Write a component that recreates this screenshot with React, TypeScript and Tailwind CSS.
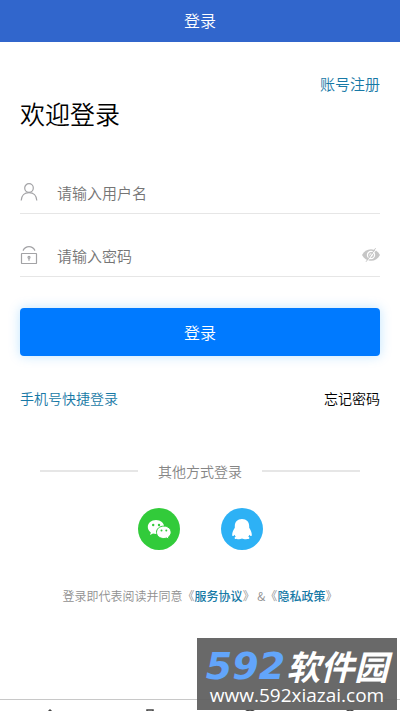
import React from "react";

function UserIcon() {
  return (
    <svg viewBox="0 0 18 18" className="h-[18px] w-[18px] shrink-0" fill="none" stroke="#a3a3a6" strokeWidth="1.2" aria-hidden="true">
      <circle cx="9" cy="5" r="4.3" />
      <path d="M1.2 17.6C1.4 12.6 4.6 9.6 9 9.6s7.6 3 7.8 8" />
    </svg>
  );
}

function LockIcon() {
  return (
    <svg viewBox="0 0 18 18" className="h-[18px] w-[18px] shrink-0" fill="none" stroke="#a3a3a6" strokeWidth="1.2" aria-hidden="true">
      <rect x="1.5" y="7.5" width="15" height="10" rx="0.4" />
      <path d="M3 4.6C4.4 2 6.4 0.7 9 0.7s4.6 1.3 6 3.9" />
      <circle cx="9" cy="11.3" r="1" />
      <path d="M9 12.2v2.6" />
    </svg>
  );
}

function EyeOffIcon() {
  return (
    <svg viewBox="0 0 18 16" className="h-4 w-[18px]" fill="none" aria-hidden="true">
      <path d="M0 8C2 4.3 5 2.2 9 2.2S16 4.3 18 8c-2 3.700-5 5.800-9 5.800S2 11.700 0 8Z" fill="#c6c6c6" />
      <circle cx="9" cy="8" r="4.200" fill="#fff" />
      <circle cx="9" cy="8" r="2.300" stroke="#c6c6c6" strokeWidth="1.300" />
      <path d="M14.500 2 5 15" stroke="#fff" strokeWidth="1" />
      <path d="M13.600 1.200 4 14.800" stroke="#c6c6c6" strokeWidth="1" />
    </svg>
  );
}

function WechatIcon() {
  return (
    <svg viewBox="0 0 42 42" className="size-[42px]" aria-hidden="true">
      <circle cx="21" cy="21" r="21" fill="#32cb3a" />
      <path d="M18 12c-4.700 0-8.200 3.100-8.200 7 0 2.200 1.100 4.100 3 5.400l-.8 2.600 3-1.500c1 .3 2 .5 3 .5 4.700 0 8.200-3.100 8.200-7s-3.500-7-8.200-7Z" fill="#fff" />
      <path d="M25.800 18.100c-4.200 0-7.300 2.700-7.300 6.200s3.100 6.200 7.300 6.200c1 0 2-.2 2.800-.5l2.500 1.300-.7-2.200c1.700-1.100 2.700-2.800 2.700-4.800 0-3.500-3.100-6.200-7.300-6.200Z" fill="#fff" stroke="#32cb3a" strokeWidth="1" />
      <g fill="#32cb3a">
        <circle cx="15.200" cy="17" r="1.200" />
        <circle cx="21" cy="17" r="1.200" />
        <circle cx="23.500" cy="22.400" r="1" />
        <circle cx="28.300" cy="22.400" r="1" />
      </g>
    </svg>
  );
}

function QQIcon() {
  return (
    <svg viewBox="0 0 42 42" className="size-[42px]" aria-hidden="true">
      <circle cx="21" cy="21" r="21" fill="#2db1f5" />
      <path d="M21 11c-4.500 0-7.200 3-7.200 7.200v1.500c-1.500 2.300-2.600 4.900-2.600 6.800 0 1 .2 1.600.6 1.600.6 0 1.300-.6 1.900-1.400.2.800.6 1.500 1.100 2.100-.8.400-1.300.8-1.300 1.300 0 .8 1.500 1.200 3.500 1.200 1.700 0 3.300-.3 4-.8.700.5 2.300.8 4 .8 2 0 3.500-.4 3.500-1.200 0-.5-.5-.9-1.300-1.300.5-.6.900-1.300 1.100-2.100.6.800 1.300 1.400 1.900 1.400.4 0 .6-.6.600-1.600 0-1.900-1.100-4.500-2.600-6.800v-1.500C28.200 14 25.500 11 21 11Z" fill="#fff" />
    </svg>
  );
}

const tabs = [
  { name: "home", shape: <path d="m2 10 8-8 8 8M5 8v9h10V8" /> },
  { name: "shop", shape: <path d="M7 6V2h6v4M2 5h16v12H2Z" /> },
  { name: "find", shape: <circle cx="10" cy="9" r="7" /> },
  { name: "mine", shape: <circle cx="10" cy="7" r="5" /> },
];

export default function App() {
  return (
    <div className="relative flex h-screen flex-col overflow-hidden bg-white font-['Noto_Sans_CJK_SC',sans-serif] font-[350] text-black">
      <header className="flex h-[42px] shrink-0 items-center justify-center bg-[#3166cc] pb-0.5 text-base text-white">
        登录
      </header>

      <main className="flex flex-1 flex-col px-5 pt-8">
        <a href="#register" className="self-end text-[15px] leading-5 text-[#1779a6]">账号注册</a>
        <h1 className="text-[25px] leading-[38px] font-[350]">欢迎登录</h1>

        <form className="mt-[38px]" onSubmit={(e) => e.preventDefault()}>
          <label className="flex h-11 items-center gap-[19px] border-b border-[#e6e6e6]">
            <UserIcon />
            <input
              type="text"
              aria-label="用户名"
              placeholder="请输入用户名"
              className="min-w-0 flex-1 pt-1 text-[15px] outline-none placeholder:text-[#757575]"
            />
          </label>
          <div className="mt-[19px] flex h-11 items-center gap-[19px] border-b border-[#e6e6e6]">
            <LockIcon />
            <input
              type="password"
              aria-label="密码"
              placeholder="请输入密码"
              className="min-w-0 flex-1 pt-1 text-[15px] outline-none placeholder:text-[#757575]"
            />
            <button type="button" aria-label="显示密码">
              <EyeOffIcon />
            </button>
          </div>
          <button
            type="submit"
            className="mt-[31px] h-12 w-full rounded bg-[#007aff] text-base text-white shadow-[0_0_12px_rgba(0,150,255,0.25)]"
          >
            登录
          </button>
        </form>

        <div className="mt-8 flex justify-between text-sm leading-5">
          <a href="#phone" className="text-[#1779a6]">手机号快捷登录</a>
          <a href="#forgot">忘记密码</a>
        </div>

        <div className="mt-[53px] flex items-center gap-5 px-5 text-sm leading-5 text-[#858585]">
          <span className="h-0.5 flex-1 bg-[#e6e6e6]" />
          其他方式登录
          <span className="h-0.5 flex-1 bg-[#e6e6e6]" />
        </div>

        <div className="mt-[27px] flex justify-center gap-[41px]">
          <button type="button" aria-label="微信登录"><WechatIcon /></button>
          <button type="button" aria-label="QQ登录"><QQIcon /></button>
        </div>

        <p className="mt-9 whitespace-nowrap text-center text-xs leading-5 text-[#909090]">
          登录即代表阅读并同意<a href="#terms">《<span className="font-medium text-[#1779a6]">服务协议</span>》</a>
          {" &"}
          <a href="#privacy">《<span className="font-medium text-[#1779a6]">隐私政策</span>》</a>
        </p>
      </main>

      <nav className="flex h-3 shrink-0 overflow-hidden border-t border-[#c8c8c8] pt-2">
        {tabs.map((tab) => (
          <a key={tab.name} href={`#${tab.name}`} aria-label={tab.name} className="flex flex-1 justify-center">
            <svg viewBox="0 0 20 20" className="size-5 shrink-0" fill="none" stroke="#444" strokeWidth="1.5" aria-hidden="true">
              {tab.shape}
            </svg>
          </a>
        ))}
      </nav>

      <aside className="absolute right-[3px] bottom-px flex h-[72px] w-[200px] flex-col items-center whitespace-nowrap bg-[#616161]/95 pt-2.5 text-white">
        <div className="flex h-9 items-center gap-px font-bold italic">
          <span className="font-['DejaVu_Sans',sans-serif] text-[38px] leading-9 text-[#62a5fb]">592</span>
          <span className="text-[34px] leading-8">软件园</span>
        </div>
        <span className="font-['Open_Sans',sans-serif] text-[19px] leading-[22px] font-medium">www.592xiazai.com</span>
      </aside>
    </div>
  );
}
